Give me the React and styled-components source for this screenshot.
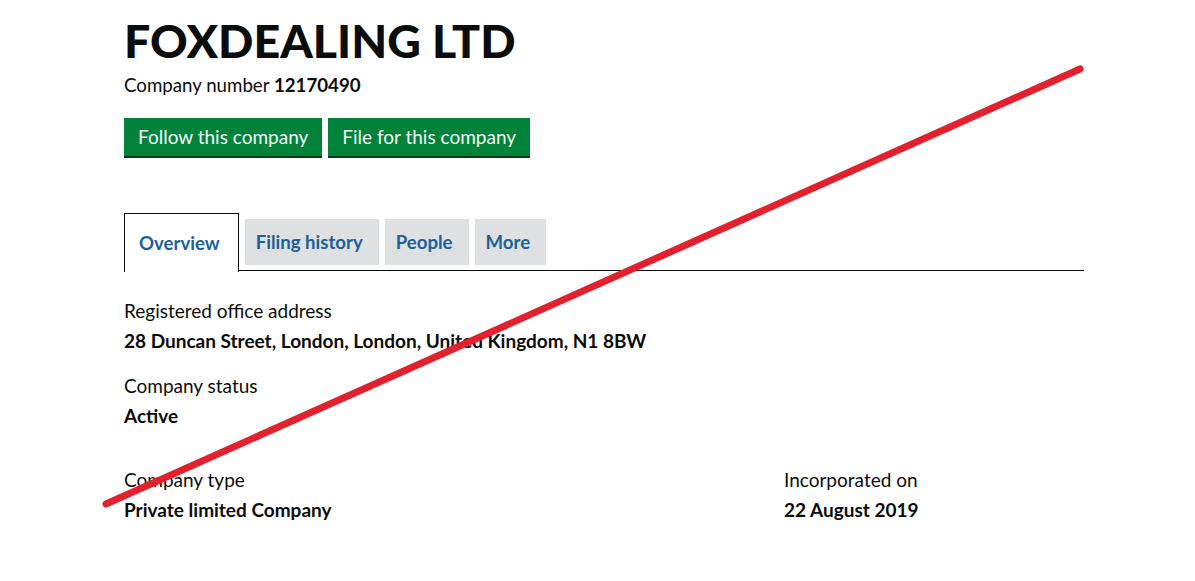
import React from "react";
import styled, { createGlobalStyle } from "styled-components";

const Global = createGlobalStyle`
  html, body { margin: 0; padding: 0; background: #fff; }
  body { font-family: Lato, "Open Sans", Arial, sans-serif; color: #0b0c0c; }
  * { box-sizing: border-box; }
`;

const Page = styled.div`
  position: relative;
  width: 1195px;
  height: 581px;
  overflow: hidden;
  padding: 12px 0 0 124px;
`;

const Container = styled.div`
  width: 960px;
`;

const Title = styled.h1`
  margin: 0;
  font-size: 46.5px;
  font-weight: 900;
  line-height: 56px;
  letter-spacing: 0;
`;

const CompanyNumber = styled.p`
  margin: 5px 0 0;
  font-size: 18.7px;
  line-height: 24px;
  strong { font-weight: 700; }
`;

const Actions = styled.div`
  display: flex;
  gap: 6px;
  margin-top: 21px;
`;

const Button = styled.a`
  display: inline-block;
  background: #00823b;
  color: #f4fbf6;
  font-size: 19px;
  line-height: 24px;
  padding: 7px 14px 7px;
  height: 38px;
  box-shadow: 0 2px 0 #003618;
  text-decoration: none;
`;

const Tabs = styled.div`
  display: flex;
  align-items: flex-start;
  margin-top: 57px;
  border-bottom: 1px solid #0b0c0c;
  height: 58px;
`;

const Tab = styled.a`
  display: flex;
  align-items: center;
  font-size: 18.6px;
  font-weight: 700;
  color: #1d5f96;
  text-decoration: none;
  ${(p) =>
    p.$active
      ? `
    padding: 0 18px 0 14px;
    border: 1px solid #0b0c0c;
    border-bottom: none;
    background: #fff;
    margin-bottom: -1px;
    height: 59px;
  `
      : `
    margin-top: 6px;
    height: 46px;
    padding: 0 16px 0 11px;
    background: #dee0e2;
    margin-left: 6px;
  `}
`;

const Grid = styled.div`
  display: grid;
  grid-template-columns: 660px 300px;
  margin-top: 28px;
`;

const Field = styled.div`
  grid-column: ${(p) => p.$col || 1};
  grid-row: ${(p) => p.$row || "auto"};
  margin-bottom: ${(p) => p.$gap || 21}px;
`;

const Label = styled.dt`
  font-size: 19px;
  line-height: 24px;
  margin: 0;
`;

const Value = styled.dd`
  font-size: 19px;
  line-height: 24px;
  font-weight: 700;
  margin: 6px 0 0;
`;

const Strike = styled.svg`
  position: absolute;
  left: 0;
  top: 0;
  pointer-events: none;
`;

export default function App() {
  return (
    <>
      <Global />
      <Page>
        <Container>
          <Title>FOXDEALING LTD</Title>
          <CompanyNumber>
            Company number <strong>12170490</strong>
          </CompanyNumber>
          <Actions>
            <Button>Follow this company</Button>
            <Button>File for this company</Button>
          </Actions>
          <Tabs>
            <Tab $active>Overview</Tab>
            <Tab>Filing history</Tab>
            <Tab>People</Tab>
            <Tab>More</Tab>
          </Tabs>
          <Grid>
            <Field>
              <Label>Registered office address</Label>
              <Value>28 Duncan Street, London, London, United Kingdom, N1 8BW</Value>
            </Field>
            <Field $gap={40}>
              <Label>Company status</Label>
              <Value>Active</Value>
            </Field>
            <Field $row={3}>
              <Label>Company type</Label>
              <Value>Private limited Company</Value>
            </Field>
            <Field $col={2} $row={3}>
              <Label>Incorporated on</Label>
              <Value>22 August 2019</Value>
            </Field>
          </Grid>
        </Container>
        <Strike width="1195" height="581" viewBox="0 0 1195 581">
          <line x1="106" y1="504" x2="1080" y2="69" stroke="#e3202d" strokeWidth="7" strokeLinecap="round" />
        </Strike>
      </Page>
    </>
  );
}
